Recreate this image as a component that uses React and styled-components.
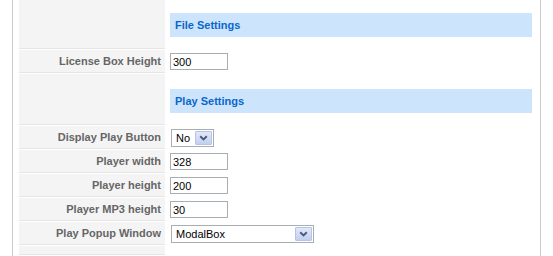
import React from "react";
import styled, { createGlobalStyle } from "styled-components";

const GlobalStyle = createGlobalStyle`
  html, body { margin: 0; padding: 0; background: #ffffff; }
  body { font-family: "Liberation Sans", Arial, sans-serif; overflow: hidden; }
`;

const Frame = styled.div`
  box-sizing: border-box;
  width: 529px;
  margin: -2px 0 0 12px;
  min-height: 258px;
  border-left: 1px solid #cacaca;
  border-right: 1px solid #cacaca;
  padding: 0 8px 0 6px;
  display: flex;
  flex-direction: column;
`;

const Row = styled.div`
  display: flex;
  padding-bottom: 1px;
  flex: ${(p) => (p.$fill ? 1 : "none")};
`;

const LabelCell = styled.div`
  box-sizing: border-box;
  flex: none;
  width: 146px;
  height: ${(p) => (p.$h ? `${p.$h}px` : "auto")};
  background: #f4f4f4;
  border-bottom: 1px solid #e5e5e5;
  display: flex;
  align-items: center;
  justify-content: flex-end;
  padding-right: 4px;
  font-size: 11px;
  font-weight: bold;
  color: #666666;
  white-space: nowrap;
`;

const ValueCell = styled.div`
  flex: 1;
  margin-left: 1px;
  padding-left: 4px;
  display: flex;
  align-items: ${(p) => (p.$header ? "flex-start" : "center")};
  padding-top: ${(p) => (p.$header ? "15px" : "0")};
`;

const SectionBar = styled.div`
  flex: 1;
  height: 24px;
  background: #cce5fc;
  color: #0b66cc;
  font-size: 11px;
  font-weight: bold;
  display: flex;
  align-items: center;
  padding-left: 5px;
`;

const TextInput = styled.input`
  box-sizing: border-box;
  width: 58px;
  height: 17px;
  margin: 0;
  border: 1px solid #a9aeb3;
  padding: 0 2px;
  font-family: "Liberation Sans", Arial, sans-serif;
  font-size: 11px;
  color: #000;
  background: #fff;
  outline: none;
`;

const SelectBox = styled.div`
  box-sizing: border-box;
  width: ${(p) => p.$w}px;
  height: 18px;
  margin-left: 1px;
  border: 1px solid #a9aeb3;
  background: #fff;
  display: flex;
  align-items: center;
  padding: 1px;
  font-size: 11px;
  color: #000;
`;

const SelectText = styled.span`
  flex: 1;
  padding-left: 3px;
  white-space: nowrap;
`;

const ArrowBox = styled.span`
  box-sizing: border-box;
  width: 17px;
  height: 14px;
  border: 1px solid #b6c4e8;
  border-radius: 1px;
  background: linear-gradient(#e2e8f8, #c3cff0);
  display: flex;
  align-items: center;
  justify-content: center;
`;

const Chevron = () => (
  <svg width="9" height="6" viewBox="0 0 9 6">
    <path d="M1.2 1.2 L4.5 4.4 L7.8 1.2" fill="none" stroke="#4a5a7c" strokeWidth="1.9" />
  </svg>
);

const Select = ({ value, width }) => (
  <SelectBox $w={width}>
    <SelectText>{value}</SelectText>
    <ArrowBox>
      <Chevron />
    </ArrowBox>
  </SelectBox>
);

const HeaderRow = ({ title }) => (
  <Row>
    <LabelCell $h={51} />
    <ValueCell $header>
      <SectionBar>{title}</SectionBar>
    </ValueCell>
  </Row>
);

const FieldRow = ({ label, children }) => (
  <Row>
    <LabelCell $h={23}>{label}</LabelCell>
    <ValueCell>{children}</ValueCell>
  </Row>
);

export default function App() {
  return (
    <>
      <GlobalStyle />
      <Frame>
        <HeaderRow title="File Settings" />
        <FieldRow label="License Box Height">
          <TextInput defaultValue="300" />
        </FieldRow>
        <HeaderRow title="Play Settings" />
        <FieldRow label="Display Play Button">
          <Select value="No" width={43} />
        </FieldRow>
        <FieldRow label="Player width">
          <TextInput defaultValue="328" />
        </FieldRow>
        <FieldRow label="Player height">
          <TextInput defaultValue="200" />
        </FieldRow>
        <FieldRow label="Player MP3 height">
          <TextInput defaultValue="30" />
        </FieldRow>
        <FieldRow label="Play Popup Window">
          <Select value="ModalBox" width={143} />
        </FieldRow>
        <Row $fill>
          <LabelCell />
          <ValueCell />
        </Row>
      </Frame>
    </>
  );
}
